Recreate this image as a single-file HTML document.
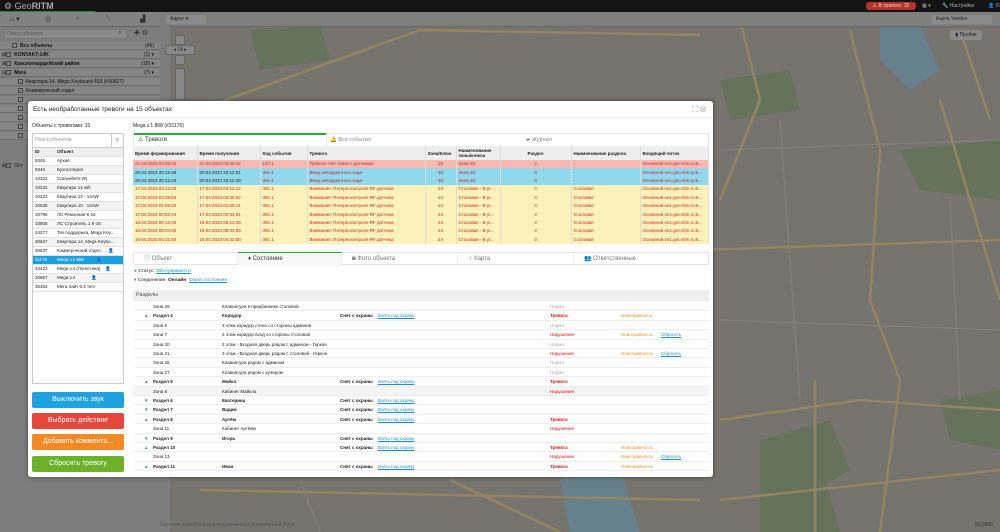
<!DOCTYPE html>
<html><head><meta charset="utf-8">
<style>
*{box-sizing:border-box;margin:0;padding:0}
body{width:1000px;height:532px;overflow:hidden;position:relative;font-family:"Liberation Sans",sans-serif;font-size:5px;color:#222;background:#75746e}
.abs{position:absolute}
#top{left:0;top:0;width:1000px;height:12px;background:#141414}
#side{left:0;top:12px;width:170px;height:520px;background:#7d7d7d}
.srow{position:absolute;left:0;width:160px;height:8px;border-bottom:1px solid #6e6e6e;background:#858585;color:#111;font-size:5px;line-height:8px}
.cb{display:inline-block;width:5px;height:5px;border:1px solid #444;vertical-align:middle;margin-right:3px}
#modal{left:28px;top:101px;width:685px;height:376px;background:#fff;border-radius:3px;box-shadow:0 0 4px rgba(0,0,0,.5)}
table{border-collapse:collapse;table-layout:fixed}
.at td,.at th{height:8.4px;line-height:8px;padding:0 2px;white-space:nowrap;overflow:hidden;font-size:4.5px;border-right:1px solid #ddd}
.at th{height:14px;background:#eee;font-weight:bold;text-align:left;line-height:5px;white-space:normal}
.r{background:#f9b9b0;color:#d2231e}.b{background:#8fd8ee;color:#c22}.y{background:#fdf3ba;color:#d2231e}
.btn{position:absolute;left:4px;width:92px;height:16px;border-radius:2px;color:#fff;font-size:7px;text-align:center;line-height:16px}
.lt td{height:8.4px;line-height:8px;font-size:4.5px;padding:0 2px;white-space:nowrap;overflow:hidden;border-bottom:1px solid #e2e2e2}
.zr{position:absolute;left:0;width:576px;height:9.4px;line-height:9px;font-size:4.5px;border-bottom:1px solid #eee}
.zr span{position:absolute;white-space:nowrap}
.lnk{color:#1a8fd0;text-decoration:underline}
.red{color:#e11;font-weight:bold}.rn{color:#e11}.gr{color:#aaa}.or{color:#f39020}
.tab{position:absolute;height:13px;line-height:13px;font-size:6px;color:#777;padding-left:10px;border-right:1px solid #eee}
</style></head><body>
<svg class="abs" style="left:0;top:0" width="1000" height="532">
<rect width="1000" height="532" fill="#75746e"/>
<g fill="#65735d"><path d="M760 440 L830 420 L850 470 L800 500 L760 490Z"/><path d="M940 400 L1000 390 L1000 450 L950 440Z"/><path d="M720 80 L790 70 L800 110 L730 120Z"/><path d="M900 150 L1000 140 L1000 200 L920 190Z"/><path d="M250 30 L320 25 L330 60 L260 70Z"/><path d="M760 470 L820 460 L840 532 L760 532Z"/></g>
<g fill="#66808c"><path d="M880 20 L920 25 L940 70 L910 90 L880 60Z"/><path d="M560 480 L620 470 L640 532 L570 532Z"/></g>
<g stroke="#958460" stroke-width="2.5" fill="none"><path d="M170 120 L420 30 L700 35"/><path d="M720 420 L860 400 L1000 410"/><path d="M815 380 L815 532"/><path d="M900 380 L880 532"/><path d="M720 500 L1000 470"/><path d="M740 20 L760 100 L720 200"/><path d="M850 30 L880 150 L870 300 L900 380"/><path d="M700 250 L1000 240"/><path d="M940 100 L1000 300"/><path d="M450 480 L560 532"/><path d="M200 490 L700 500"/><path d="M960 30 L990 120"/></g>
<g stroke="#85847d" stroke-width="1" fill="none"><path d="M720 150 L1000 140"/><path d="M720 320 L1000 330"/><path d="M780 120 L800 400"/><path d="M950 200 L960 400"/><path d="M300 480 L320 532"/></g>
</svg>
<div id="top" class="abs">
<div class="abs" style="left:0;top:0;width:95px;height:12px;border-bottom:1px solid #2a8a2a"></div>
<div class="abs" style="left:4px;top:1px;color:#aaa;font-size:9px;line-height:10px">⚙ Geo<b>RITM</b></div>
<div class="abs" style="left:866px;top:2px;width:50px;height:8px;background:#b8322c;border-radius:3px;color:#fcc;font-size:5px;line-height:8px;text-align:center">⚠ В тревоге: 15</div>
<div class="abs" style="left:922px;top:2px;color:#aaa;font-size:5px;line-height:8px">▦ ▾</div>
<div class="abs" style="left:942px;top:2px;color:#aaa;font-size:5px;line-height:8px">🔧 Настройки</div>
<div class="abs" style="left:988px;top:2px;color:#aaa;font-size:5px;line-height:8px">👤 О</div>
</div>
<div id="side" class="abs">
<div class="abs" style="left:0;top:0;width:160px;height:15px;background:#828282;border-bottom:1px solid #666"></div>
<div class="abs" style="left:10px;top:3px;color:#222;font-size:7px">⌂ ▾</div>
<div class="abs" style="left:45px;top:3px;color:#333;font-size:7px">◎</div>
<div class="abs" style="left:75px;top:3px;color:#333;font-size:7px">♁</div>
<div class="abs" style="left:106px;top:3px;color:#333;font-size:7px">⟍</div>
<div class="abs" style="left:140px;top:3px;color:#333;font-size:7px">▟</div>
<div class="abs" style="left:4px;top:17px;width:123px;height:10px;background:#8a8a8a;border:1px solid #777;color:#555;font-size:5px;line-height:9px;padding-left:2px">Поиск объектов</div>
<div class="abs" style="left:118px;top:18px;color:#333;font-size:6px">⌕</div>
<div class="abs" style="left:134px;top:17px;color:#333;font-size:7px">✚ ⚙</div>
<div class="srow" style="top:30px;padding-left:12px"><span class="cb"></span><b>Все объекты</b><span style="float:right;padding-right:6px">(46)</span></div>
<div class="srow" style="top:39px;padding-left:2px">⊞<span class="cb"></span><b>KONTAKT-14K</b><span style="float:right;padding-right:6px">(1) ▾</span></div>
<div class="srow" style="top:48px;padding-left:2px">⊞<span class="cb"></span><b>Красногвардейский район</b><span style="float:right;padding-right:6px">(15) ▾</span></div>
<div class="srow" style="top:57px;padding-left:2px">⊟<span class="cb"></span><b>Мега</b><span style="float:right;padding-right:6px">(7) ▾</span></div>
<div class="srow" style="top:66px;padding-left:18px"><span class="cb"></span>Квартира 14, Mega Keyboard 433 (#30627)</div>
<div class="srow" style="top:75px;padding-left:18px"><span class="cb"></span>Коммерческий отдел</div>
<div class="srow" style="top:84px;padding-left:18px"><span class="cb"></span></div>
<div class="srow" style="top:93px;padding-left:18px"><span class="cb"></span></div>
<div class="srow" style="top:102px;padding-left:18px"><span class="cb"></span></div>
<div class="srow" style="top:111px;padding-left:18px"><span class="cb"></span></div>
<div class="srow" style="top:120px;padding-left:18px"><span class="cb"></span></div>
<div class="srow" style="top:150px;padding-left:2px;background:#7d7d7d;border:0">⊞<span class="cb"></span>Ост</div>
</div>
<div class="abs" style="left:170px;top:12px;width:830px;height:15px;background:#7e7e7b;border-bottom:1px solid #6a6a6a"></div>
<div class="abs" style="left:166px;top:15px;width:40px;height:9px;background:#8a8a8a;border-radius:2px;font-size:5px;line-height:9px;padding-left:4px;color:#222">Адрес ▾</div>
<div class="abs" style="left:932px;top:15px;width:60px;height:9px;background:#8a8a8a;font-size:5px;line-height:9px;padding-left:4px;color:#222">Карта Yandex</div>
<div class="abs" style="left:950px;top:30px;width:32px;height:10px;background:#8a8a8a;border-radius:2px;font-size:5px;line-height:10px;text-align:center;color:#222">▮ Пробки</div>
<div class="abs" style="left:175px;top:35px;width:10px;height:10px;background:#888;border:1px solid #666"></div>
<div class="abs" style="left:175px;top:55px;width:10px;height:10px;background:#888;border:1px solid #666"></div>
<div class="abs" style="left:165px;top:45px;width:30px;height:10px;background:#888;border:1px solid #666;font-size:5px;text-align:center;line-height:8px">◂ 14 ▸</div>
<div class="abs" style="left:175px;top:68px;width:10px;height:32px;background:#888;border:1px solid #666"></div>
<div class="abs" style="left:160px;top:522px;color:#555;font-size:5px">Система разработана и поддерживается компанией Ритм</div>
<div class="abs" style="left:975px;top:522px;color:#333;font-size:5px">59.8865</div>

<div id="modal" class="abs">
<div class="abs" style="left:5px;top:5px;font-size:6.5px;color:#222">Есть необработанные тревоги на 15 объектах</div>
<div class="abs" style="left:664px;top:4px;font-size:8px;color:#999">⛶ ⊗</div>
<div class="abs" style="left:0;top:16px;width:685px;border-top:1px solid #eee"></div>
<div class="abs" style="left:4px;top:22px;font-size:5px">Объекты с тревогами: 15</div>
<div class="abs" style="left:4px;top:32px;width:92px;height:251px;border:1px solid #ccc">
 <div style="height:14px;border-bottom:1px solid #ccc;font-size:5px;color:#999;line-height:13px;padding-left:2px">Поиск объектов<span style="float:right;width:12px;border-left:1px solid #ccc;text-align:center;color:#555;font-size:6px">⌕</span></div>
 <table class="lt" style="width:90px">
 <colgroup><col style="width:22px"><col></colgroup>
 <tr style="background:#eee;font-weight:bold"><td><b>ID</b></td><td><b>Объект</b></td></tr>
 <tr><td>9345</td><td>Архив</td></tr>
 <tr style="background:#f4f4f4"><td>9346</td><td>Бухгалтерия</td></tr>
 <tr><td>10322</td><td>Caravelle/V-2N</td></tr>
 <tr style="background:#f4f4f4"><td>10332</td><td>Квартира 14 wifi</td></tr>
 <tr><td>10323</td><td>Квартира 13 - 14AW</td></tr>
 <tr style="background:#f4f4f4"><td>10536</td><td>Квартира 10 - 14AW</td></tr>
 <tr><td>10796</td><td>ЛС Ремонная К-16</td></tr>
 <tr style="background:#f4f4f4"><td>10805</td><td>ЛС Строитель 1 К-16</td></tr>
 <tr><td>24277</td><td>Тех.поддержка, Mega Key...</td></tr>
 <tr style="background:#f4f4f4"><td>30627</td><td>Квартира 14, Mega Keybo...</td></tr>
 <tr><td>30637</td><td>Коммерческий отдел, ... 👤</td></tr>
 <tr style="background:#1aa0dc;color:#fff"><td>31176</td><td>Mega v.1 868 &nbsp;&nbsp;&nbsp;&nbsp;&nbsp;&nbsp;&nbsp;&nbsp;&nbsp;👤</td></tr>
 <tr><td>34423</td><td>Mega v.4 (Логистика) &nbsp;&nbsp;&nbsp;👤</td></tr>
 <tr style="background:#f4f4f4"><td>10667</td><td>Mega v.4 &nbsp;&nbsp;&nbsp;&nbsp;&nbsp;&nbsp;&nbsp;&nbsp;&nbsp;&nbsp;&nbsp;&nbsp;👤</td></tr>
 <tr><td>35353</td><td>Мега лайт в.3 тест</td></tr>
 </table>
</div>
<div class="btn" style="top:291px;background:#1ca3e0">Выключить звук</div>
<div class="btn" style="top:312px;background:#e5473c">Выбрать действие</div>
<div class="btn" style="top:333px;background:#f58a25">Добавить коммента...</div>
<div class="btn" style="top:355px;background:#6db22a">Сбросить тревогу</div>

<div class="abs" style="left:105px;top:22px;font-size:5px">Mega v.1 868 (#31176)</div>
<div class="abs" style="left:105px;top:32px;width:576px;height:14px;border:1px solid #e4e4e4;border-bottom:0">
 <div class="abs" style="left:0;top:-1px;width:192px;height:2px;background:#2aa83a"></div>
 <div class="abs" style="left:4px;top:2px;font-size:6px;color:#333">⚠ Тревоги</div>
 <div class="abs" style="left:192px;top:1px;height:12px;border-left:1px solid #e4e4e4"></div>
 <div class="abs" style="left:196px;top:3px;font-size:5.5px;color:#888">🔔 Все события</div>
 <div class="abs" style="left:392px;top:3px;font-size:5.5px;color:#888">▰ Журнал</div>
</div>
<table class="at abs" style="left:105px;top:45px;width:576px">
<colgroup><col style="width:64px"><col style="width:63px"><col style="width:47px"><col style="width:118px"><col style="width:31px"><col style="width:44px"><col style="width:71px"><col style="width:69px"><col></colgroup>
<tr><th>Время формирования</th><th>Время получения</th><th>Код события</th><th>Тревога</th><th>Зона/Ключ</th><th>Наименование зоны/ключа</th><th style="text-align:center">Раздел</th><th>Наименование раздела</th><th>Входящий поток</th></tr>
<tr class="r"><td>21.04.2023 03:46:33</td><td>21.04.2023 03:46:42</td><td>147.1</td><td>Тревога: Нет связи с датчиком</td><td style="text-align:center">30</td><td>Зона 30</td><td style="text-align:center">0</td><td>-</td><td>Основной on1.geo.ritm.ru:5...</td></tr>
<tr class="b"><td style="color:#222">20.04.2023 20:12:45</td><td style="color:#222">20.04.2023 20:12:51</td><td>461.1</td><td>Ввод некорректного кода</td><td style="text-align:center">28</td><td>Зона 28</td><td style="text-align:center">0</td><td>-</td><td>Основной on1.geo.ritm.ru:5...</td></tr>
<tr class="b"><td style="color:#222">20.04.2023 20:12:43</td><td style="color:#222">20.04.2023 20:12:49</td><td>461.1</td><td>Ввод некорректного кода</td><td style="text-align:center">28</td><td>Зона 28</td><td style="text-align:center">0</td><td>-</td><td>Основной on1.geo.ritm.ru:5...</td></tr>
<tr class="y"><td>17.04.2023 04:12:03</td><td>17.04.2023 04:12:12</td><td>381.1</td><td>Внимание: Потеря контроля RF датчика</td><td style="text-align:center">24</td><td>Столовая - В уг...</td><td style="text-align:center">3</td><td>Столовая</td><td>Основной on1.geo.ritm.ru:5...</td></tr>
<tr class="y"><td>17.04.2023 03:35:53</td><td>17.04.2023 03:36:02</td><td>381.1</td><td>Внимание: Потеря контроля RF датчика</td><td style="text-align:center">24</td><td>Столовая - В уг...</td><td style="text-align:center">3</td><td>Столовая</td><td>Основной on1.geo.ritm.ru:5...</td></tr>
<tr class="y"><td>17.04.2023 01:55:04</td><td>17.04.2023 01:55:11</td><td>381.1</td><td>Внимание: Потеря контроля RF датчика</td><td style="text-align:center">24</td><td>Столовая - В уг...</td><td style="text-align:center">3</td><td>Столовая</td><td>Основной on1.geo.ritm.ru:5...</td></tr>
<tr class="y"><td>17.04.2023 00:52:44</td><td>17.04.2023 00:52:51</td><td>381.1</td><td>Внимание: Потеря контроля RF датчика</td><td style="text-align:center">24</td><td>Столовая - В уг...</td><td style="text-align:center">3</td><td>Столовая</td><td>Основной on1.geo.ritm.ru:5...</td></tr>
<tr class="y"><td>16.04.2023 06:13:40</td><td>16.04.2023 06:13:49</td><td>381.1</td><td>Внимание: Потеря контроля RF датчика</td><td style="text-align:center">24</td><td>Столовая - В уг...</td><td style="text-align:center">3</td><td>Столовая</td><td>Основной on1.geo.ritm.ru:5...</td></tr>
<tr class="y"><td>16.04.2023 05:04:00</td><td>16.04.2023 05:04:09</td><td>381.1</td><td>Внимание: Потеря контроля RF датчика</td><td style="text-align:center">24</td><td>Столовая - В уг...</td><td style="text-align:center">3</td><td>Столовая</td><td>Основной on1.geo.ritm.ru:5...</td></tr>
<tr class="y"><td>16.04.2023 04:31:50</td><td>16.04.2023 04:32:00</td><td>381.1</td><td>Внимание: Потеря контроля RF датчика</td><td style="text-align:center">24</td><td>Столовая - В уг...</td><td style="text-align:center">3</td><td>Столовая</td><td>Основной on1.geo.ritm.ru:5...</td></tr>
</table>

<div class="abs" style="left:105px;top:151px;width:576px;height:13px;border:1px solid #e4e4e4">
 <div class="tab" style="left:0;width:104px">ⓘ Объект</div>
 <div class="abs" style="left:104px;top:-1px;width:104px;height:2px;background:#2aa83a"></div>
 <div class="tab" style="left:104px;width:104px;color:#333;background:#f8f8f8">♦ Состояние</div>
 <div class="tab" style="left:208px;width:116px">◙ Фото объекта</div>
 <div class="tab" style="left:324px;width:116px">♁ Карта</div>
 <div class="tab" style="left:440px;width:134px;border:0">👥 Ответственные</div>
</div>
<div class="abs" style="left:106px;top:168px;font-size:4.8px"><span style="color:#2aa83a">●</span> Статус: <span class="lnk">Обслуживается</span></div>
<div class="abs" style="left:106px;top:177px;font-size:4.8px"><span style="color:#2aa83a">♦</span> Соединение: <b>Онлайн</b> &nbsp;<span class="lnk">Опрос состояния</span></div>
<div class="abs" style="left:105px;top:189px;width:576px;height:11px;background:#eee;font-size:5.5px;line-height:11px;padding-left:3px;color:#555">Разделы</div>
<div class="abs" style="left:105px;top:201px;width:576px;height:174px">
<div class="zr" style="top:0"><span style="left:20px">Зона 29</span><span style="left:89px">Клавиатура в предбаннике столовой</span><span class="gr" style="left:417px">Норма</span></div>
<div class="zr" style="top:9.4px"><span style="left:11px;color:#2aa83a">▲</span><span style="left:20px"><b>Раздел 4</b></span><span style="left:89px"><b>Коридор</b></span><span style="left:207px"><b>Снят с охраны</b></span><span class="lnk" style="left:245px">Взять под охрану</span><span class="red" style="left:417px">Тревога</span><span class="or" style="left:488px">Неисправность</span></div>
<div class="zr" style="top:18.8px"><span style="left:20px">Зона 6</span><span style="left:89px">3 этаж коридор стена со стороны админов</span><span class="gr" style="left:417px">Норма</span></div>
<div class="zr" style="top:28.2px"><span style="left:20px">Зона 7</span><span style="left:89px">3 этаж коридор вход со стороны столовой</span><span class="rn" style="left:417px">Нарушение</span><span class="or" style="left:488px">Неисправность</span><span class="lnk" style="left:528px">Сбросить</span></div>
<div class="zr" style="top:37.6px"><span style="left:20px">Зона 20</span><span style="left:89px">3 этаж - Входная дверь рядом с админом - Геркон</span><span class="gr" style="left:417px">Норма</span></div>
<div class="zr" style="top:47px"><span style="left:20px">Зона 21</span><span style="left:89px">3 этаж - Входная дверь рядом с столовой - Геркон</span><span class="rn" style="left:417px">Нарушение</span><span class="or" style="left:488px">Неисправность</span><span class="lnk" style="left:528px">Сбросить</span></div>
<div class="zr" style="top:56.4px"><span style="left:20px">Зона 26</span><span style="left:89px">Клавиатура рядом с админом</span><span class="gr" style="left:417px">Норма</span></div>
<div class="zr" style="top:65.8px"><span style="left:20px">Зона 27</span><span style="left:89px">Клавиатура рядом с кулером</span><span class="gr" style="left:417px">Норма</span></div>
<div class="zr" style="top:75.2px"><span style="left:11px;color:#2aa83a">▲</span><span style="left:20px"><b>Раздел 5</b></span><span style="left:89px"><b>Майкл</b></span><span style="left:207px"><b>Снят с охраны</b></span><span class="lnk" style="left:245px">Взять под охрану</span><span class="red" style="left:417px">Тревога</span></div>
<div class="zr" style="top:84.6px;background:#f4f4f4"><span style="left:20px">Зона 8</span><span style="left:89px">Кабинет Майкла</span><span class="rn" style="left:417px">Нарушение</span></div>
<div class="zr" style="top:94px"><span style="left:11px;color:#2aa83a">▼</span><span style="left:20px"><b>Раздел 6</b></span><span style="left:89px"><b>Екатерина</b></span><span style="left:207px"><b>Снят с охраны</b></span><span class="lnk" style="left:245px">Взять под охрану</span></div>
<div class="zr" style="top:103.4px"><span style="left:11px;color:#2aa83a">▼</span><span style="left:20px"><b>Раздел 7</b></span><span style="left:89px"><b>Вадим</b></span><span style="left:207px"><b>Снят с охраны</b></span><span class="lnk" style="left:245px">Взять под охрану</span></div>
<div class="zr" style="top:112.8px"><span style="left:11px;color:#2aa83a">▲</span><span style="left:20px"><b>Раздел 8</b></span><span style="left:89px"><b>Артём</b></span><span style="left:207px"><b>Снят с охраны</b></span><span class="lnk" style="left:245px">Взять под охрану</span><span class="red" style="left:417px">Тревога</span></div>
<div class="zr" style="top:122.2px"><span style="left:20px">Зона 11</span><span style="left:89px">Кабинет Артёма</span><span class="rn" style="left:417px">Нарушение</span></div>
<div class="zr" style="top:131.6px"><span style="left:11px;color:#2aa83a">▼</span><span style="left:20px"><b>Раздел 9</b></span><span style="left:89px"><b>Игорь</b></span><span style="left:207px"><b>Снят с охраны</b></span><span class="lnk" style="left:245px">Взять под охрану</span></div>
<div class="zr" style="top:141px"><span style="left:11px;color:#2aa83a">▲</span><span style="left:20px"><b>Раздел 10</b></span><span style="left:207px"><b>Снят с охраны</b></span><span class="lnk" style="left:245px">Взять под охрану</span><span class="red" style="left:417px">Тревога</span><span class="or" style="left:488px">Неисправность</span></div>
<div class="zr" style="top:150.4px"><span style="left:20px">Зона 13</span><span class="rn" style="left:417px">Нарушение</span><span class="or" style="left:488px">Неисправность</span><span class="lnk" style="left:528px">Сбросить</span></div>
<div class="zr" style="top:159.8px"><span style="left:11px;color:#2aa83a">▲</span><span style="left:20px"><b>Раздел 11</b></span><span style="left:89px"><b>Иван</b></span><span style="left:207px"><b>Снят с охраны</b></span><span class="lnk" style="left:245px">Взять под охрану</span><span class="red" style="left:417px">Тревога</span><span class="or" style="left:488px">Неисправность</span></div>
</div>
</div>
</body></html>
